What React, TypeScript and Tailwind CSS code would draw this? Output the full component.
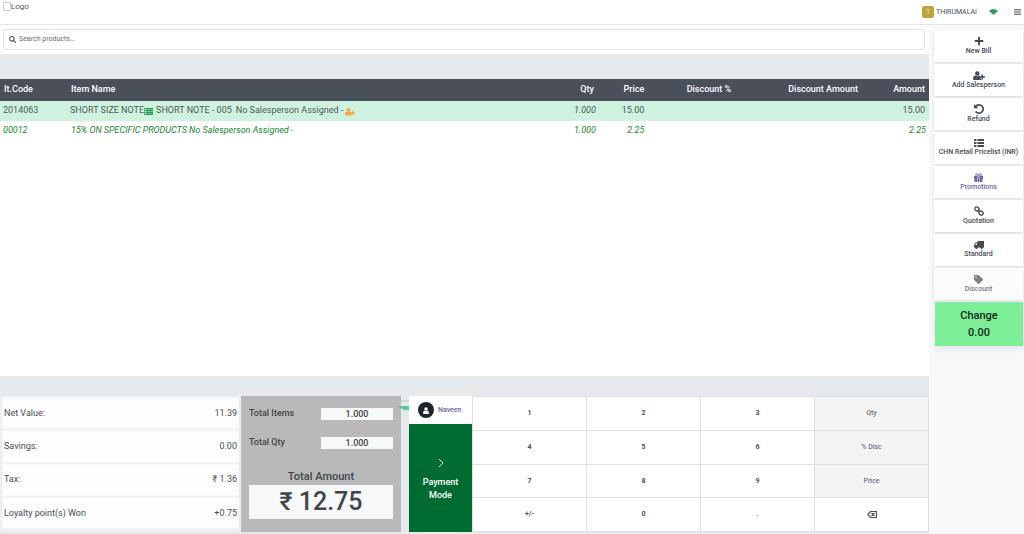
import React from 'react';
import { FaPlus, FaTag, FaSearch } from 'react-icons/fa';

const BrokenImage = () => (
  <svg width="8" height="9" viewBox="0 0 8 9" fill="none" aria-hidden="true">
    <rect x="0.5" y="0.5" width="7" height="8" stroke="#c9ccd0" />
  </svg>
);

const UserPlusIcon = ({ className = '' }) => (
  <svg className={className} width="12" height="9" viewBox="0 0 24 18" fill="currentColor" aria-hidden="true">
    <circle cx="8.5" cy="5" r="4.500" />
    <path d="M4 9q4.500 3 9 0l1 1v5h3v2q-1 1-2.500 1h-12Q0 18 0 15q0-5 4-6z" />
    <path d="M17 7h3v3.500h4v3h-4V17h-3v-3.500h-3.500v-3H17z" />
  </svg>
);

const UndoIcon = () => (
  <svg width="10" height="10" viewBox="0 0 1536 1536" fill="currentColor" aria-hidden="true">
    <path d="M1536 768q0 156-61 298t-164 245-245 164-298 61q-172 0-327-72.500t-264-204.500q-7-10-6.500-22.500t8.500-20.500l137-138q10-9 25-9 16 2 23 12 73 95 179 147t225 52q104 0 198.500-40.500t163.500-109.500 109.500-163.500 40.500-198.500-40.500-198.500-109.500-163.500-163.500-109.500-198.500-40.500q-98 0-188 35.500t-160 101.500l137 138q31 30 14 69-17 40-59 40h-448q-26 0-45-19t-19-45v-448q0-42 40-59 39-17 69 14l130 129q107-101 244.500-156.500t284.500-55.500q156 0 298 61t245 164 164 245 61 298z" />
  </svg>
);

const ThListIcon = () => (
  <svg width="10" height="8" viewBox="0 0 20 16" fill="currentColor" aria-hidden="true">
    <path d="M0 0h5v4H0zM7 0h13v4H7zM0 6h5v4H0zM7 6h13v4H7zM0 12h5v4H0zM7 12h13v4H7z" />
  </svg>
);

const ListIcon = ({ className = '' }) => (
  <svg className={className} width="9" height="7" viewBox="0 0 18 14" fill="currentColor" aria-hidden="true">
    <path d="M0 0h3v3H0zM4 0h14v3H4zM0 4h3v2.500H0zM4 4h14v2.500H4zM0 7.500h3V10H0zM4 7.500h14V10H4zM0 11h3v3H0zM4 11h14v3H4z" />
  </svg>
);

const GiftIcon = () => (
  <svg width="9" height="9" viewBox="0 0 18 18" aria-hidden="true">
    <path d="M9 6C4 7 2 4 4 2s4 0 5 4c1-4 3-6 5-4s0 5-5 4z" fill="none" stroke="currentColor" strokeWidth="2" />
    <path d="M0 6h7v6H0zM11 6h7v6h-7zM1 12h6v6H1zM11 12h6v6h-6zM8 8h2v10H8z" fill="currentColor" />
  </svg>
);

const ChainIcon = () => (
  <svg width="10" height="10" viewBox="0 0 20 20" fill="none" stroke="currentColor" strokeWidth="2.600" aria-hidden="true">
    <rect x="1.500" y="2.500" width="9" height="7" rx="3" transform="rotate(45 6 6)" />
    <rect x="9.500" y="10.500" width="9" height="7" rx="3" transform="rotate(45 14 14)" />
    <path d="M7.500 7.500l5 5" />
  </svg>
);

const TruckIcon = () => (
  <svg width="10" height="8" viewBox="0 0 20 16" fill="currentColor" aria-hidden="true">
    <path fillRule="evenodd" d="M7 0h13v13H0V8l3-5h4zM2 8h4V5H4z" />
    <circle cx="5" cy="13" r="2.800" />
    <circle cx="15.500" cy="13" r="2.800" />
  </svg>
);

const PersonIcon = () => (
  <svg width="6" height="7" viewBox="0 0 12 14" fill="currentColor" aria-hidden="true">
    <circle cx="6" cy="4" r="3.500" />
    <path d="M3 7q3 2 6 0 3 1 3 6l-1 1H1l-1-1q0-5 3-6z" />
  </svg>
);

const MenuIcon = () => (
  <svg width="7" height="6" viewBox="0 0 14 12" stroke="currentColor" strokeWidth="2.400" aria-hidden="true">
    <path d="M0 1.500h14M0 6h14M0 10.500h14" />
  </svg>
);

const BackspaceIcon = () => (
  <svg className="mx-auto" width="10" height="7" viewBox="0 0 20 14" fill="none" stroke="currentColor" strokeWidth="2.400" role="img" aria-label="Backspace">
    <path d="M7 1h12v12H7L1.500 7zM9 4l6 6M15 4l-6 6" />
  </svg>
);

const actions = [
  { label: 'New Bill', icon: <FaPlus size={10} />, className: 'bg-white text-[#444b55]' },
  { label: 'Add Salesperson', icon: <UserPlusIcon />, className: 'bg-white text-[#444b55]' },
  { label: 'Refund', icon: <UndoIcon />, className: 'bg-white text-[#444b55]' },
  { label: 'CHN Retail Pricelist (INR)', icon: <ThListIcon />, className: 'bg-white text-[#444b55]' },
  { label: 'Promotions', icon: <GiftIcon />, className: 'bg-white text-[#6c66a5]' },
  { label: 'Quotation', icon: <ChainIcon />, className: 'bg-white text-[#444b55]' },
  { label: 'Standard', icon: <TruckIcon />, className: 'bg-white text-[#444b55]' },
  { label: 'Discount', icon: <FaTag size={9} />, className: 'bg-[#fafbfc] text-[#7c7f83]' },
];

const summary = [
  { label: 'Net Value:', value: '11.39' },
  { label: 'Savings:', value: '0.00' },
  { label: 'Tax:', value: '₹ 1.36' },
  { label: 'Loyalty point(s) Won', value: '+0.75' },
];

const keys = ['1', '2', '3', 'Qty', '4', '5', '6', '% Disc', '7', '8', '9', 'Price', '+/-', '0', '.', 'Backspace'];
const modes = ['Qty', '% Disc', 'Price'];

const Header = () => (
  <header className="flex h-[25px] items-center justify-between border-b border-[#e4e6e9] bg-white">
    <a href="#" className="flex self-start pt-[2px] pl-[3px] text-[8px] leading-[9px] text-[#555]">
      <BrokenImage />
      Logo
    </a>
    <div className="flex items-center pr-[3px]">
      <span className="flex size-3 items-center justify-center rounded-[2px] bg-[#b9a53c] text-[7px] text-[#eee6b8]">T</span>
      <span className="ml-[2px] text-[7px] text-[#444b55]">THIRUMALAI</span>
      <svg className="ml-3" width="9" height="6" viewBox="0 0 18 12" fill="#2f9e5b" role="img" aria-label="Online">
        <path d="M0 4Q9-4 18 4L9 12z" />
      </svg>
      <button type="button" aria-label="Menu" className="ml-4 text-[#444b55]">
        <MenuIcon />
      </button>
    </div>
  </header>
);

const SearchBar = () => (
  <div className="bg-white py-1 pr-1 pl-[3px]">
    <label className="flex h-[21px] items-center gap-[3px] rounded-[2px] border border-[#dfe2e5] px-[5px]">
      <FaSearch size={7} className="shrink-0 text-[#444b55]" />
      <input type="text" aria-label="Search products" placeholder="Search products..." className="w-full text-[7px] outline-none placeholder:text-[#666c73]" />
    </label>
  </div>
);

const OrderTable = () => (
  <div className="h-[297px] bg-white">
    <table className="w-full table-fixed text-[9px]">
      <colgroup>
        <col className="w-[7%]" />
        <col className="w-[52%]" />
        <col className="w-[6%]" />
        <col className="w-[5%]" />
        <col className="w-[10%]" />
        <col className="w-[13%]" />
        <col className="w-[7%]" />
      </colgroup>
      <thead>
        <tr className="h-[22px] bg-[#495059] text-right text-white [&>th]:font-medium">
          <th className="pl-1 text-left">It.Code</th>
          <th className="pl-[6px] text-left">Item Name</th>
          <th className="pr-[10px]">Qty</th>
          <th className="pr-[6px]">Price</th>
          <th className="pr-3">Discount %</th>
          <th className="pr-[6px]">Discount Amount</th>
          <th className="pr-1">Amount</th>
        </tr>
      </thead>
      <tbody>
        <tr className="h-5 bg-[#cff1df] text-right text-[#4d5a55]">
          <td className="pl-[3px] text-left">2014063</td>
          <td className="pl-[5px] text-left">
            <div className="flex items-center whitespace-nowrap">
              SHORT SIZE NOTE
              <ListIcon className="text-[#229954]" />
              <span className="ml-[3px]">SHORT NOTE - 005</span>
              <span className="ml-1">No Salesperson Assigned -</span>
              <UserPlusIcon className="ml-[2px] w-[10px] text-[#f8a13b]" />
            </div>
          </td>
          <td className="pr-2 italic">1.000</td>
          <td className="pr-[6px]">15.00</td>
          <td></td>
          <td></td>
          <td className="pr-1">15.00</td>
        </tr>
        <tr className="h-[19px] text-right text-[#17852f] italic">
          <td className="pl-[3px] text-left">00012</td>
          <td className="pl-[6px] text-left">
            15% ON SPECIFIC PRODUCTS No Salesperson Assigned -
          </td>
          <td className="pr-2">1.000</td>
          <td className="pr-[6px]">2.25</td>
          <td></td>
          <td></td>
          <td className="pr-[3px]">2.25</td>
        </tr>
      </tbody>
    </table>
  </div>
);

const Summary = () => (
  <dl className="flex w-[241px] flex-col gap-px bg-[#eceff2] px-[2px] pt-px pb-[3px] text-[9px] text-[#4a4d50]">
    {summary.map((row) => (
      <div key={row.label} className="flex flex-1 items-center justify-between bg-[#fdfdfe] px-[2px] pt-px shadow-[inset_0_0_2px_1px_#f3f5f7]">
        <dt>{row.label}</dt>
        <dd>{row.value}</dd>
      </div>
    ))}
  </dl>
);

const Totals = () => (
  <div className="w-40 bg-[#b9b9bb] px-2 pt-3 text-[#42464a]">
    {['Total Items', 'Total Qty'].map((label) => (
      <div key={label} className="mb-[17px] flex h-3 items-center justify-between text-[9px] font-medium">
        <span>{label}</span>
        <span className="w-[72px] bg-[#f7f8fa] text-center leading-3">1.000</span>
      </div>
    ))}
    <div className="pt-1 text-center text-[11px] leading-[14px] font-medium">Total Amount</div>
    <div className="mt-px bg-[#f7f8fa] text-center text-[25px] leading-[34px] font-medium">₹ 12.75</div>
  </div>
);

const PaymentColumn = () => (
  <div className="relative ml-2 flex w-[63px] flex-col">
    <div className="absolute top-1 -left-3 h-[10px] w-3">
      <svg width="12" height="10" viewBox="0 0 12 10" aria-hidden="true">
        <path d="M4 1h8" stroke="#a4dfca" />
        <path d="M0 6h12v4H7z" fill="#55c9a2" />
      </svg>
    </div>
    <button type="button" className="flex h-7 items-center gap-1 bg-white pl-[9px] text-[7px] font-medium text-[#6c66a5]">
      <span className="flex size-4 items-center justify-center rounded-full bg-[#20252b] text-white">
        <PersonIcon />
      </span>
      Naveen
    </button>
    <button type="button" className="flex flex-1 flex-col items-center justify-center bg-[#016c31] text-[9px] leading-[13px] font-medium text-white">
      <svg className="mt-1 mb-2" width="6" height="10" viewBox="0 0 6 10" fill="none" stroke="currentColor" aria-hidden="true">
        <path d="M1 1l4 4-4 4" />
      </svg>
      Payment
      <br />
      Mode
    </button>
  </div>
);

const Numpad = () => (
  <div className="grid flex-1 grid-cols-4 grid-rows-4 gap-px bg-[#dcdfe3] p-px text-[7px] font-bold text-[#495057]">
    {keys.map((key) => (
      <button key={key} type="button" className={modes.includes(key) ? 'bg-[#f3f4f6] font-medium text-[#6f757b]' : 'bg-white'}>
        {key === 'Backspace' ? <BackspaceIcon /> : key}
      </button>
    ))}
  </div>
);

const Sidebar = () => (
  <aside className="w-[95px] bg-[#f7f8fa] pt-[5px] pr-px pl-[5px]">
    <div className="flex flex-col gap-[2px]">
      {actions.map((action) => (
        <button
          key={action.label}
          type="button"
          className={`flex h-8 flex-col items-center justify-center gap-px text-[7px] leading-[9px] font-medium whitespace-nowrap shadow-[0_1px_3px_#d5d9de] ${action.className}`}
        >
          {action.icon}
          {action.label}
        </button>
      ))}
    </div>
    <div className="mt-[2px] ml-px bg-[#7bee96] py-[5px] text-center text-[11px] leading-[17px] font-medium text-[#15251a] shadow-[0_3px_6px_#e2e5e9]">
      <div>Change</div>
      <div>0.00</div>
    </div>
  </aside>
);

const App = () => {
  return (
    <div className="flex min-h-screen flex-col bg-[#e6eaed] font-['Roboto',sans-serif]">
      <Header />
      <div className="flex flex-1">
        <main className="flex min-w-0 flex-1 flex-col">
          <SearchBar />
          <div className="h-[25px]" />
          <OrderTable />
          <section className="mt-5 mb-[2px] flex flex-1">
            <Summary />
            <Totals />
            <PaymentColumn />
            <Numpad />
          </section>
        </main>
        <Sidebar />
      </div>
    </div>
  );
};

export default App;
